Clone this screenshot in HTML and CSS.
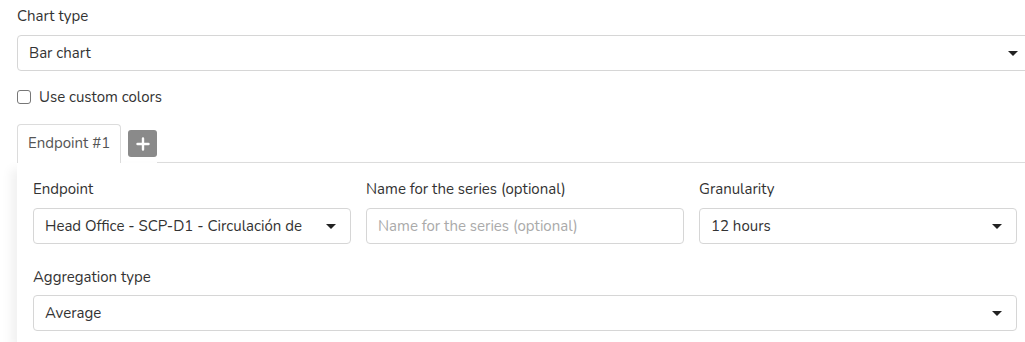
FILE: index.html
```html
<!DOCTYPE html>
<html>
<head>
<meta charset="utf-8">
<link rel="stylesheet" href="styles.css">
</head>
<body>
<div class="page">
  <div class="field">
    <div class="label">Chart type</div>
    <div class="select wide"><span>Bar chart</span><span class="caret"></span></div>
  </div>
  <label class="check"><span class="box"></span><span>Use custom colors</span></label>
  <div class="tabs">
    <div class="tab">Endpoint #1</div>
    <div class="add"><svg width="14" height="14" viewBox="0 0 14 14"><path d="M7 1.5v11M1.5 7h11" stroke="#fff" stroke-width="2.4" stroke-linecap="round"/></svg></div>
    <div class="tabline"></div>
  </div>
  <div class="panel">
    <div class="row">
      <div class="col">
        <div class="label">Endpoint</div>
        <div class="select"><span>Head Office - SCP-D1 - Circulación de</span><span class="caret"></span></div>
      </div>
      <div class="col">
        <div class="label">Name for the series (optional)</div>
        <div class="input">Name for the series (optional)</div>
      </div>
      <div class="col">
        <div class="label">Granularity</div>
        <div class="select"><span>12 hours</span><span class="caret"></span></div>
      </div>
    </div>
    <div class="field2">
      <div class="label">Aggregation type</div>
      <div class="select"><span>Average</span><span class="caret"></span></div>
    </div>
  </div>
</div>
</body>
</html>
```
FILE: styles.css
```css
html, body { margin: 0; padding: 0; background: #fff; overflow: hidden; }
body { font-family: "Nunito", "Lato", "Noto Sans", sans-serif; font-size: 15px; color: #333; }
.page { width: 1016px; padding: 6px 0 0 17px; }
.label { height: 20px; line-height: 20px; margin-bottom: 9px; color: #333; }
.select, .input {
  box-sizing: border-box; height: 36px; border: 1px solid #d6d6d6; border-radius: 4px;
  display: flex; align-items: center; justify-content: space-between; padding: 0 14px 0 11px;
  background: #fff; white-space: nowrap; overflow: hidden;
}
.input { color: #aaa; }
.caret { width: 0; height: 0; border-left: 5px solid transparent; border-right: 5px solid transparent; border-top: 5px solid #222; flex: none; margin-left: 8px; }
.check { display: flex; align-items: center; gap: 8px; margin-top: 16px; height: 20px; }
.box { width: 12px; height: 12px; border: 1px solid #777; border-radius: 3px; }
.tabs { display: flex; align-items: flex-end; margin-top: 17px; height: 39px; }
.tab {
  box-sizing: border-box; height: 39px; padding: 0 10px; line-height: 36px; border: 1px solid #dcdcdc;
  border-bottom: none; border-radius: 4px 4px 0 0; color: #555; background: #fff; white-space: nowrap; flex: none;
}
.add {
  width: 29px; height: 27px; background: #8a8a8a; border-radius: 3px; margin: 0 0 6px 7px;
  display: flex; align-items: center; justify-content: center; flex: none;
}
.tabline { flex: 1; border-bottom: 1px solid #dcdcdc; height: 0; }
.panel { padding: 16px 16px 12px; background: #fff; box-shadow: -6px 6px 10px rgba(0,0,0,0.06); }
.row { display: grid; grid-template-columns: repeat(3, 1fr); gap: 15px; }
.field2 { margin-top: 23px; }
.col .label { margin-bottom: 9px; }
.field2 .label { margin-bottom: 8px; }
```
